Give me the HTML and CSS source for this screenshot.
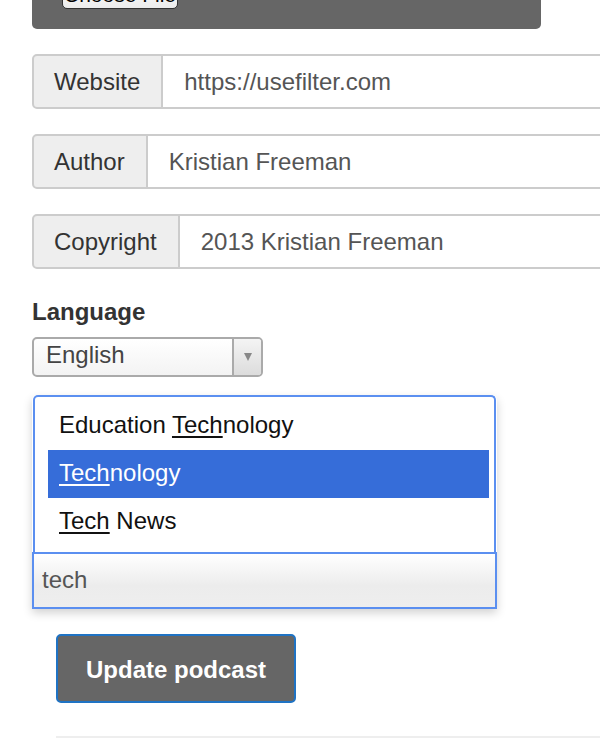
FILE: index.html
```html
<!DOCTYPE html>
<html>
<head>
<meta charset="utf-8">
<link rel="stylesheet" href="styles.css">
</head>
<body>
<div class="page">
  <div class="file-panel">
    <span class="file-btn">Choose File</span>
    <span class="file-none">No file chosen</span>
  </div>

  <div class="group">
    <span class="addon">Website</span>
    <span class="field">https://usefilter.com</span>
  </div>
  <div class="group">
    <span class="addon">Author</span>
    <span class="field">Kristian Freeman</span>
  </div>
  <div class="group">
    <span class="addon">Copyright</span>
    <span class="field">2013 Kristian Freeman</span>
  </div>

  <div class="label">Language</div>
  <div class="select">
    <span class="select-text">English</span>
    <span class="select-arrow"><span class="tri"></span></span>
  </div>

  <div class="dropdown">
    <ul class="results">
      <li class="item">Education <u>Tech</u>nology</li>
      <li class="item active"><u>Tech</u>nology</li>
      <li class="item"><u>Tech</u> News</li>
    </ul>
    <div class="search">tech</div>
  </div>

  <div class="actions">
    <span class="submit">Update podcast</span>
  </div>
  <div class="rule"></div>
</div>
</body>
</html>
```

FILE: styles.css
```css
* { box-sizing: border-box; }
html, body { margin: 0; padding: 0; background: #fff; overflow: hidden; }
body {
  font-family: "Liberation Sans", Arial, Helvetica, sans-serif;
  font-size: 24px;
  color: #333;
  width: 600px;
  height: 750px;
}
.page { padding-left: 32px; }

.file-panel {
  width: 509px;
  height: 60px;
  margin-top: -31px;
  background: #666;
  border-radius: 0 0 5px 5px;
  display: flex;
  align-items: flex-end;
  padding: 0 0 20px 30px;
  gap: 18px;
}
.file-btn {
  display: inline-block;
  width: 116px;
  height: 28px;
  line-height: 26px;
  background: linear-gradient(#fff, #ececec);
  border: 1px solid #333;
  border-radius: 5px;
  color: #000;
  font-size: 21px;
  text-align: center;
}
.file-none { color: #999; font-size: 21px; line-height: 24px; margin-bottom: 4px; }

.group {
  display: flex;
  height: 55px;
  margin-top: 25px;
  width: 568px;
}
.addon {
  display: flex;
  align-items: center;
  padding: 0 21px 0 20px;
  background: #eee;
  border: 2px solid #ccc;
  border-radius: 5px 0 0 5px;
  color: #333;
}
.field {
  flex: 1;
  display: flex;
  align-items: center;
  padding: 0 21px;
  border: 2px solid #ccc;
  border-left: none;
  border-right: none;
  color: #555;
  white-space: nowrap;
}

.label {
  font-weight: bold;
  line-height: 28px;
  margin-top: 29px;
  color: #333;
}
.select {
  display: flex;
  width: 231px;
  height: 40px;
  margin-top: 11px;
  border: 2px solid #aaa;
  border-radius: 5px;
  background: linear-gradient(#fff, #f3f3f3);
  overflow: hidden;
}
.select-text {
  flex: 1;
  padding-left: 12px;
  line-height: 32px;
  color: #444;
}
.select-arrow {
  width: 29px;
  border-left: 2px solid #aaa;
  background: linear-gradient(#f4f4f4, #dcdcdc);
  display: flex;
  align-items: center;
  justify-content: center;
}
.tri {
  width: 0; height: 0;
  border-left: 4px solid transparent;
  border-right: 4px solid transparent;
  border-top: 8px solid #888;
}

.dropdown {
  width: 465px;
  margin-top: 18px;
  box-shadow: 0 4px 10px rgba(0,0,0,0.18);
  border-radius: 5px 5px 0 0;
}
.results {
  list-style: none;
  margin: 0 0 0 1px;
  width: 463px;
  padding: 5px 5px 6px 13px;
  border: 2px solid #5b8ff0;
  border-bottom: none;
  border-radius: 5px 5px 0 0;
  background: #fff;
}
.item {
  height: 48px;
  line-height: 45px;
  padding-left: 11px;
  color: #111;
}
.item u { text-decoration-thickness: 2px; text-underline-offset: 3px; }
.item.active { background: #366dd9; color: #fff; }
.search {
  height: 57px;
  border: 2px solid #5b8ff0;
  background: linear-gradient(#fff, #ececec 60%, #eee);
  padding-left: 8px;
  line-height: 52px;
  color: #555;
}

.actions { padding: 25px 0 0 24px; }
.submit {
  display: inline-flex;
  align-items: center;
  justify-content: center;
  width: 240px;
  height: 69px;
  padding-top: 2px;
  background: #666;
  border: 2px solid #1f73c4;
  border-radius: 5px;
  color: #fff;
  font-weight: bold;
}
.rule {
  margin: 33px 0 0 24px;
  height: 2px;
  background: #eee;
}
```
